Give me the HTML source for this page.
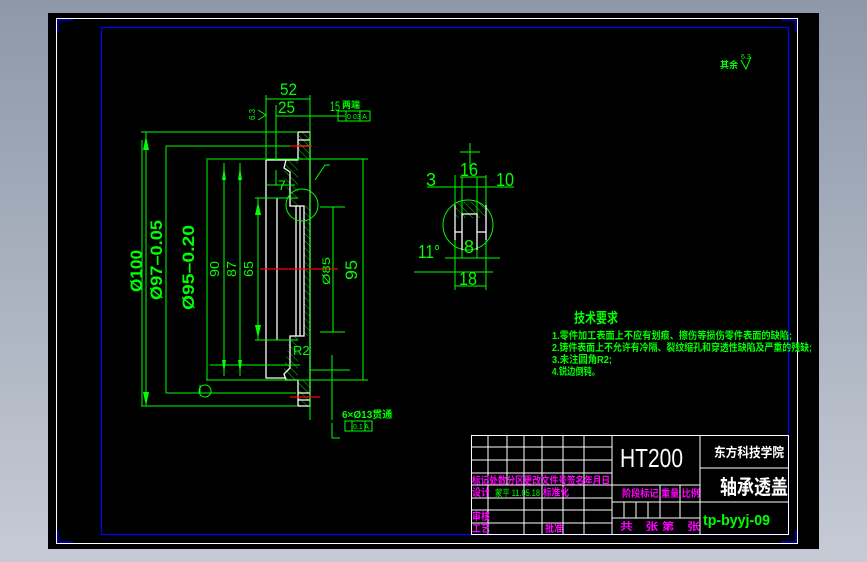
<!DOCTYPE html>
<html><head><meta charset="utf-8"><style>
html,body{margin:0;padding:0;width:867px;height:562px;overflow:hidden;background:linear-gradient(#8d98a9,#c6cbd5);}
svg{position:absolute;left:0;top:0}
text{font-family:"Liberation Sans","Noto Sans CJK SC",sans-serif}
.b{font-weight:bold}
</style></head><body>
<svg width="867" height="562" viewBox="0 0 867 562">
<defs><pattern id="h" width="5" height="5" patternUnits="userSpaceOnUse" patternTransform="rotate(-45)"><line x1="0" y1="0" x2="0" y2="5" stroke="#00ff00" stroke-width="0.8"/></pattern></defs>
<rect x="48" y="13" width="771" height="536" fill="#000"/>
<rect x="56.5" y="18.5" width="741" height="525" fill="none" stroke="#fff" stroke-width="1"/>
<rect x="101.5" y="27.5" width="687" height="507" fill="none" stroke="#0000ff" stroke-width="1.2"/>
<g stroke="#0000ff" stroke-width="1.2"><path d="M58 20h15M58 20v12M796 20h-15M796 20v12M58 542h15M58 542v-12M796 542h-15M796 542v-12"/></g>

<g fill="url(#h)" stroke="none">
<rect x="298" y="132" width="12" height="28"/><rect x="298" y="380" width="12" height="26"/>
<path d="M286 160H298V206H290L284 172Z"/><path d="M286 380H298V336H290L284 368Z"/>
<rect x="304" y="206" width="6" height="130"/>
</g>
<g stroke="#fff" stroke-width="1.3" fill="none">
<path d="M298 132H310V406H298"/>
<path d="M298 132V160H266M298 160L286 160L284 168L290 172V206H304V336H290V368L284 374L286 380H298V406"/>
<path d="M266 160V378H286"/>
<path d="M277 198V340"/>
<path d="M298 140H310M298 146H310M298 393H310M298 400H310"/>
<path d="M296 206V336M300 206V336"/>
</g>
<g stroke="#00ff00" stroke-width="1" fill="none">
<path d="M141 132H298M141 406H298M166 146H296M166 393H296M206 159H368M206 380H368M255 198H298M255 340H298M320 207H345M320 332H345"/>
<path d="M146 132V406M166 146V393M207 160V380M224 163V376M240 163V376M258 198V340M333 207V332M363 159V380"/>
<path d="M266 95V160M310 95V420M266 99H310M276 116H330M276 105V160M330 116H345"/>
<path d="M276 170V185M266 185H295"/>
<path d="M315 180L325 165H330"/>
<circle cx="302" cy="205" r="16"/>
<path d="M210 365H300M200 385V395M310 370H350M332 355V420M332 423V438M332 438H340"/>
<circle cx="205" cy="391" r="6"/>
<path d="M142 140V406"/>
</g>
<g fill="#00ff00">
<path d="M143 150l3-14 3 14zM143 392l3 14 3-14zM222 180l2-13 2 13zM222 360l2 13 2-13zM238 180l2-13 2 13zM238 360l2 13 2-13zM255 215l3-13 3 13zM255 325l3 13 3-13z"/>
</g>
<g stroke="#ff0000" stroke-width="1.2"><path d="M260 269H338M290 146H312M290 397H320"/></g>
<g fill="#00ff00" font-size="17">
<text x="280" y="95" textLength="17" lengthAdjust="spacingAndGlyphs">52</text>
<text x="278" y="113" textLength="17" lengthAdjust="spacingAndGlyphs">25</text>
<text x="330" y="111" font-size="14" textLength="10" lengthAdjust="spacingAndGlyphs">15</text>
<text x="342" y="108" font-size="9" class="b">两端</text>
<text x="278" y="190" font-size="14">7</text>
<text x="293" y="355" font-size="13">R2</text>
<text transform="translate(142,292) rotate(-90)" class="b" textLength="42" lengthAdjust="spacingAndGlyphs">Ø100</text>
<text transform="translate(162,300) rotate(-90)" class="b" textLength="80" lengthAdjust="spacingAndGlyphs">Ø97–0.05</text>
<text transform="translate(194,310) rotate(-90)" class="b" textLength="85" lengthAdjust="spacingAndGlyphs">Ø95–0.20</text>
<text transform="translate(219,277) rotate(-90)" font-size="13" textLength="16" lengthAdjust="spacingAndGlyphs">90</text>
<text transform="translate(236,277) rotate(-90)" font-size="13" textLength="16" lengthAdjust="spacingAndGlyphs">87</text>
<text transform="translate(253,277) rotate(-90)" font-size="13" textLength="16" lengthAdjust="spacingAndGlyphs">65</text>
<text transform="translate(330,285) rotate(-90)" font-size="11" textLength="28" lengthAdjust="spacingAndGlyphs">Ø85</text>
<text transform="translate(357,280) rotate(-90)" textLength="20" lengthAdjust="spacingAndGlyphs">95</text>
<text x="342" y="418" font-size="10" class="b">6×Ø13贯通</text>
<text x="255" y="120" font-size="8" transform="rotate(-90 255 120)">6.3</text>
<text x="720" y="68" font-size="9" class="b">其余</text>
<text x="741" y="59" font-size="7">6.3</text>
</g>
<g stroke="#00ff00" fill="none" stroke-width="1"><path d="M338 111h32v10h-32zM346 111v10M360 111v10M345 421h27v10h-27zM352 421v10M365 421v10M741 60l5 9 5-12M258 110l8 5-8 5"/></g>
<g fill="#00ff00" font-size="7"><text x="347" y="119">0.03 A</text><text x="353" y="429">0.1 A</text></g>

<g stroke="#00ff00" stroke-width="1" fill="none">
<path d="M427 187H514M445 258H500M414 272H493M455 286H486M455 175V290M486 175V290M462 177V258M477 177V258M470 143V170M460 152H480M460 177H486"/>
<circle cx="468" cy="225" r="25"/>
</g>
<path d="M455 202H486V218H455Z" fill="url(#h)"/>
<g stroke="#fff" stroke-width="1.3" fill="none"><path d="M462 250V214H477V250M455 205V240M486 205V240M455 232H462M477 232H486"/></g>
<g fill="#00ff00" font-size="18">
<text x="426" y="186" textLength="10" lengthAdjust="spacingAndGlyphs">3</text>
<text x="460" y="176" textLength="18" lengthAdjust="spacingAndGlyphs">16</text>
<text x="496" y="186" textLength="18" lengthAdjust="spacingAndGlyphs">10</text>
<text x="418" y="258" textLength="22" lengthAdjust="spacingAndGlyphs">11°</text>
<text x="464" y="253" textLength="10" lengthAdjust="spacingAndGlyphs">8</text>
<text x="459" y="285" textLength="18" lengthAdjust="spacingAndGlyphs">18</text>
</g>

<g fill="#00ff00" class="b">
<text x="574" y="323" font-size="14" textLength="44" lengthAdjust="spacingAndGlyphs">技术要求</text>
<text x="552" y="339" font-size="10" textLength="240" lengthAdjust="spacingAndGlyphs">1.零件加工表面上不应有划痕、擦伤等损伤零件表面的缺陷;</text>
<text x="552" y="351" font-size="10" textLength="260" lengthAdjust="spacingAndGlyphs">2.铸件表面上不允许有冷隔、裂纹缩孔和穿透性缺陷及严重的残缺;</text>
<text x="552" y="363" font-size="10" textLength="60" lengthAdjust="spacingAndGlyphs">3.未注圆角R2;</text>
<text x="552" y="375" font-size="10" textLength="48" lengthAdjust="spacingAndGlyphs">4.锐边倒钝。</text>
</g>

<g stroke="#fff" stroke-width="1" fill="none">
<rect x="471.5" y="435.5" width="317" height="99"/>
<path d="M488 435V535M507 435V485M524 435V535M542 435V535M563 435V535M584 435V535M612 435V535M700 435V535"/>
<path d="M471 447H612M471 460H612M471 473H612M471 485H612M471 498H612M471 510H612M471 523H612"/>
<path d="M612 485H700M612 502H700M612 518H700M700 468H788M700 502H788M624 502V518M636 502V518M648 502V518M660 485V518M680 485V518"/>
</g>
<g fill="#ff00ff" font-size="10" class="b">
<text x="472" y="484" textLength="138" lengthAdjust="spacingAndGlyphs">标记处数分区更改文件号签名年月日</text>
<text x="472" y="496" textLength="18" lengthAdjust="spacingAndGlyphs">设计</text>
<text x="543" y="496" textLength="26" lengthAdjust="spacingAndGlyphs">标准化</text>
<text x="472" y="520" textLength="18" lengthAdjust="spacingAndGlyphs">审核</text>
<text x="472" y="532" textLength="18" lengthAdjust="spacingAndGlyphs">工艺</text>
<text x="545" y="532" textLength="18" lengthAdjust="spacingAndGlyphs">批准</text>
<text x="622" y="497" textLength="78" lengthAdjust="spacingAndGlyphs">阶段标记 重量 比例</text>
<text x="620" y="530" textLength="80" lengthAdjust="spacingAndGlyphs">共　张 第　张</text>
</g>
<text x="495" y="496" fill="#00ff00" font-size="9" textLength="45" lengthAdjust="spacingAndGlyphs">蒙平 11.05.18</text>
<text x="620" y="467" fill="#fff" font-size="26" textLength="63" lengthAdjust="spacingAndGlyphs">HT200</text>
<text x="714" y="457" fill="#fff" font-size="13" class="b" textLength="70" lengthAdjust="spacingAndGlyphs">东方科技学院</text>
<text x="720" y="494" fill="#fff" font-size="20" class="b" textLength="68" lengthAdjust="spacingAndGlyphs">轴承透盖</text>
<text x="703" y="525" fill="#00ff00" font-size="15" class="b" textLength="67" lengthAdjust="spacingAndGlyphs">tp-byyj-09</text>
</svg>
</body></html>
